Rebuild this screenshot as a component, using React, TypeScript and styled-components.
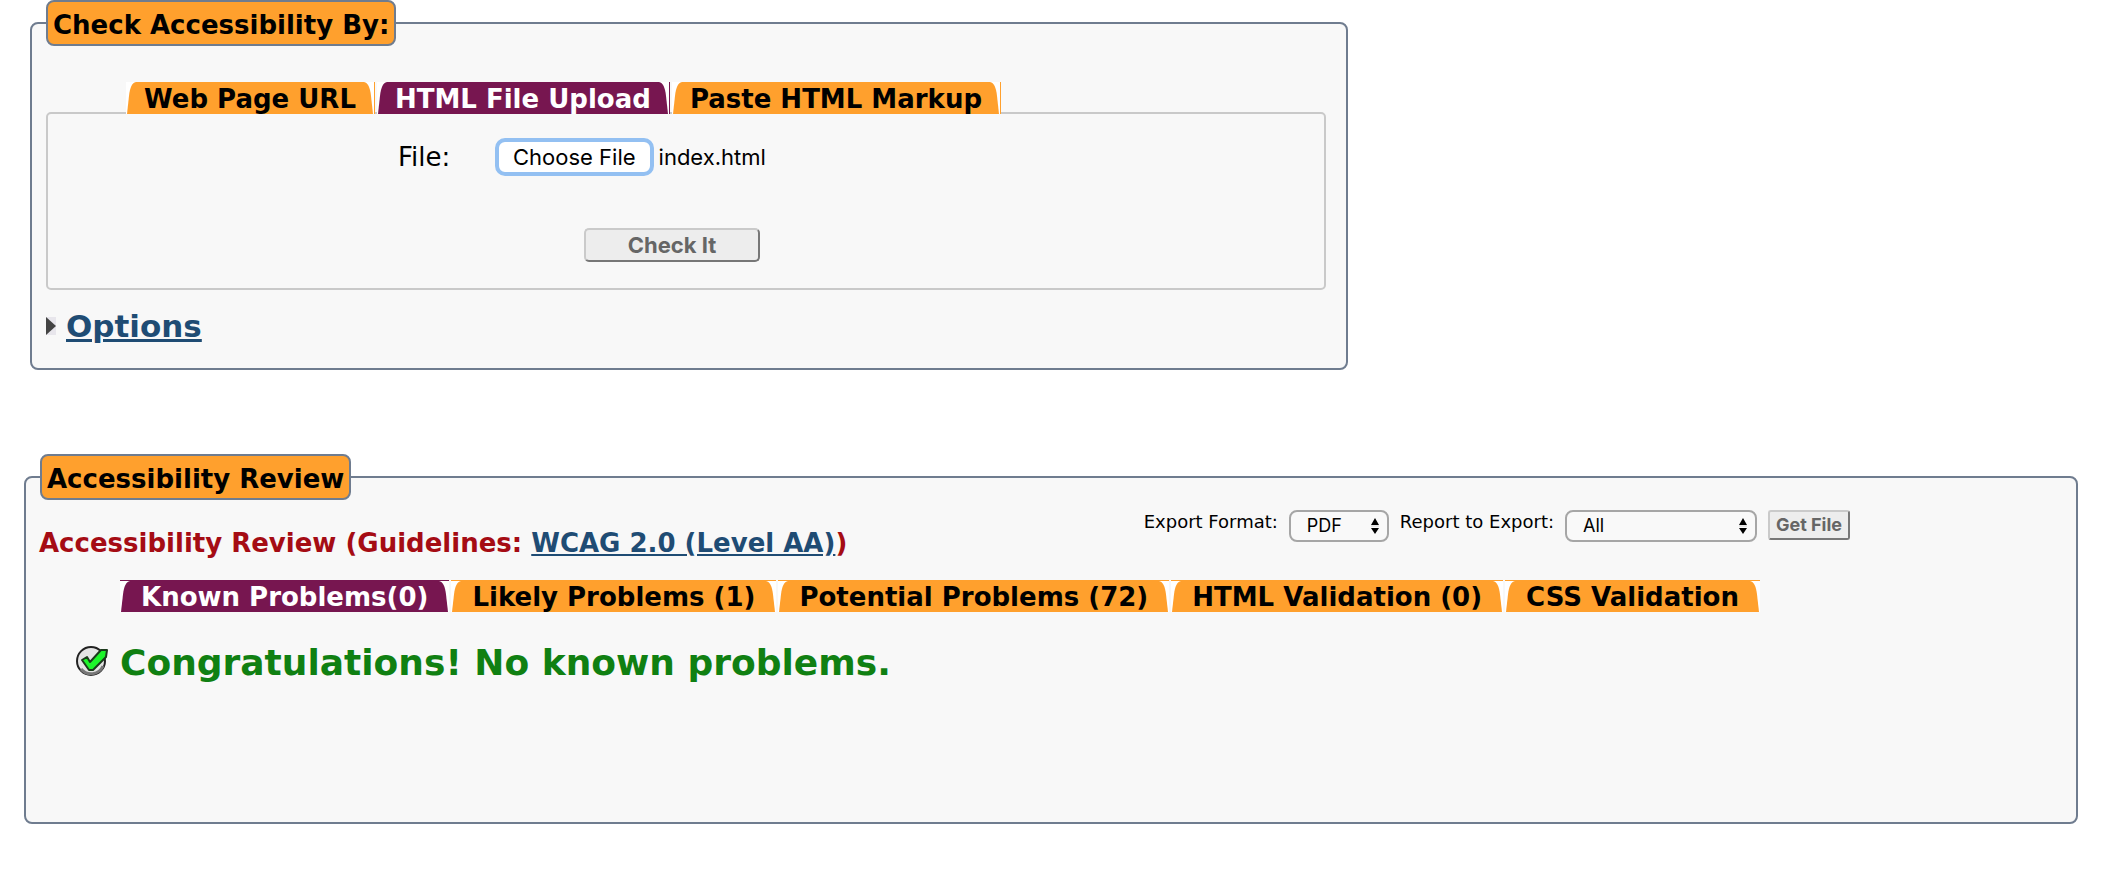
import React, { useRef, useState } from 'react';
import styled, { createGlobalStyle } from 'styled-components';

const ORANGE = '#ffa02d';
const PURPLE = '#771650';
const SLATE = '#6f7c8f';
const LINK = '#1f4c74';

const GlobalStyle = createGlobalStyle`
  *, *::before, *::after { box-sizing: border-box; }
  body {
    margin: 0;
    background: #fff;
    color: #000;
    font-family: Verdana, 'DejaVu Sans', sans-serif;
    font-size: 26px;
    line-height: 30px;
  }
`;

const Page = styled.main`
  padding: 0 28px 58px 24px;
`;

const Panel = styled.fieldset`
  min-width: 0;
  margin: 0;
  padding: 0 20px 24px 14px;
  border: 2px solid ${SLATE};
  border-radius: 8px;
  background: #f8f8f8;
`;

const CheckerPanel = styled(Panel)`
  max-width: 1318px;
  margin: 0 0 84px 6px;
  padding-bottom: 22px;
`;

const Legend = styled.legend`
  height: 46px;
  padding: 8px 5px 4px;
  border: 2px solid ${SLATE};
  border-radius: 8px;
  background: ${ORANGE};
  font-weight: bold;
`;

type TabLine = 'side' | 'top';

const TabList = styled.div<{ $line: TabLine }>`
  position: relative;
  display: flex;
  gap: 2px;
  margin: ${(p) => (p.$line === 'side' ? 36 : 0)}px 0 0 80px;
`;

const TabButton = styled.button<{ $active: boolean; $line: TabLine }>`
  display: flex;
  height: 32px;
  padding: 0;
  border: none;
  ${(p) => (p.$line === 'side' ? 'border-right' : 'border-top')}: 1px solid ${(p) => (p.$active ? PURPLE : ORANGE)};
  background: #fff;
  color: ${(p) => (p.$active ? '#fff' : '#000')};
  font: bold 26px/30px Verdana, 'DejaVu Sans', sans-serif;
  white-space: nowrap;
  cursor: pointer;
`;

const TabText = styled.span<{ $active: boolean; $line: TabLine }>`
  height: 100%;
  padding: ${(p) => (p.$line === 'side' ? '2px 6px 0' : '1px 9px 0')};
  background: ${(p) => (p.$active ? PURPLE : ORANGE)};
`;

const TabEnd = styled.svg`
  display: block;
  flex: none;
  width: 12px;
  height: 100%;
`;

const UploadBox = styled.div`
  display: flex;
  flex-direction: column;
  gap: 52px;
  height: 178px;
  margin: -2px 0 0;
  padding: 24px 28px 0 0;
  border: 2px solid #c9c9c9;
  border-radius: 5px;
`;

const FileRow = styled.div`
  display: grid;
  grid-template-columns: 97px auto auto;
  justify-content: start;
  align-items: center;
  margin-left: 350px;
`;

const HiddenFile = styled.input`
  display: none;
`;

const ChooseButton = styled.button`
  height: 38px;
  margin-right: 5px;
  padding: 0 14px;
  border: 4px solid #93c0f2;
  border-radius: 10px;
  background: #fff;
  color: #000;
  font: 22px/30px Inter, sans-serif;
`;

const FileName = styled.span`
  font: 22px/30px Inter, sans-serif;
`;

const RaisedButton = styled.button`
  border: 2px solid;
  border-color: #cacaca #777 #777 #cacaca;
  border-radius: 5px;
  background: #ededed;
  color: #666;
  font-family: Inter, sans-serif;
  font-weight: bold;
`;

const CheckButton = styled(RaisedButton)`
  align-self: center;
  width: 176px;
  height: 34px;
  padding: 0;
  font-size: 22px;
  line-height: 30px;
`;

const GetFileButton = styled(RaisedButton)`
  width: 82px;
  height: 30px;
  padding: 0;
  border-radius: 3px;
  font-size: 18px;
  line-height: 24px;
`;

const OptionsHeading = styled.h2`
  display: flex;
  align-items: center;
  gap: 10px;
  margin: 16px 0 0;
  font-size: 31px;
  line-height: 40px;
`;

const Anchor = styled.a`
  color: ${LINK};
  text-decoration: underline;
`;

const Header = styled.div`
  display: flex;
  align-items: flex-start;
  justify-content: space-between;
`;

const ReviewTitle = styled.h3`
  margin: 28px 0 22px -1px;
  color: #a50c14;
  font-size: 26px;
  line-height: 30px;
`;

const ExportForm = styled.form`
  display: flex;
  align-items: flex-start;
  gap: 11px;
  margin: 10px 206px 0 0;
  font-size: 18px;
  line-height: 24px;
`;

const SelectWrap = styled.span<{ $width: number }>`
  position: relative;
  width: ${(p) => p.$width}px;
`;

const Select = styled.select`
  display: block;
  appearance: none;
  width: 100%;
  height: 32px;
  padding: 0 0 0 16px;
  border: 2px solid #a6a6a6;
  border-radius: 8px;
  background: #f9f9f9;
  color: #000;
  font: 18px/28px Inter, sans-serif;
`;

const SelectArrows = styled.svg`
  position: absolute;
  top: 8px;
  right: 9px;
  width: 10px;
  height: 16px;
  pointer-events: none;
`;

const Result = styled.h2`
  display: flex;
  align-items: flex-start;
  gap: 11px;
  min-height: 158px;
  margin: 28px 0 0 35px;
  color: #108012;
  font-size: 36px;
  line-height: 46px;
`;

const ResultIcon = styled.svg`
  flex: none;
  margin-top: 5px;
`;

type TabProps = {
  label: string;
  active: boolean;
  line: TabLine;
  onSelect: () => void;
};

function Tab({ label, active, line, onSelect }: TabProps) {
  const fill = active ? PURPLE : ORANGE;
  return (
    <TabButton type="button" role="tab" aria-selected={active} $active={active} $line={line} onClick={onSelect}>
      <TabEnd viewBox="0 0 12 32" preserveAspectRatio="none" aria-hidden="true">
        <path d="M1 32 L3 14 C4 5 6 1 10 0 H12 V32 Z" fill={fill} />
      </TabEnd>
      <TabText $active={active} $line={line}>{label}</TabText>
      <TabEnd viewBox="0 0 12 32" preserveAspectRatio="none" aria-hidden="true">
        <path d="M11 32 L9 14 C8 5 6 1 2 0 H0 V32 Z" fill={fill} />
      </TabEnd>
    </TabButton>
  );
}

function Tabs({ labels, initial, line }: { labels: string[]; initial: number; line: TabLine }) {
  const [current, setCurrent] = useState(initial);
  return (
    <TabList role="tablist" $line={line}>
      {labels.map((label, i) => (
        <Tab key={label} label={label} line={line} active={i === current} onSelect={() => setCurrent(i)} />
      ))}
    </TabList>
  );
}

function Arrows() {
  return (
    <SelectArrows viewBox="0 0 10 16" aria-hidden="true">
      <path d="M5 0 L9 7 H1 Z M5 16 L9 10 H1 Z" fill="#000" />
      <path d="M1 8 H9" stroke="#d0d0d0" strokeWidth="1" />
    </SelectArrows>
  );
}

export default function App() {
  const fileRef = useRef<HTMLInputElement>(null);
  const [fileName, setFileName] = useState('index.html');

  return (
    <Page>
      <GlobalStyle />
      <CheckerPanel>
        <Legend>Check Accessibility By:</Legend>
        <Tabs labels={['Web Page URL', 'HTML File Upload', 'Paste HTML Markup']} initial={1} line="side" />
        <UploadBox>
          <FileRow>
            <label htmlFor="upload">File:</label>
            <HiddenFile
              id="upload"
              type="file"
              ref={fileRef}
              onChange={(e) => setFileName(e.target.files?.[0]?.name ?? '')}
            />
            <ChooseButton type="button" onClick={() => fileRef.current?.click()}>Choose File</ChooseButton>
            <FileName>{fileName}</FileName>
          </FileRow>
          <CheckButton type="button">Check It</CheckButton>
        </UploadBox>
        <OptionsHeading>
          <svg width="10" height="18" viewBox="0 0 10 18" aria-hidden="true">
            <rect width="10" height="18" fill="#e8e6ec" />
            <path d="M0 0 L10 9 L0 18 Z" fill="#444" />
          </svg>
          <Anchor href="#options">Options</Anchor>
        </OptionsHeading>
      </CheckerPanel>

      <Panel>
        <Legend>Accessibility Review</Legend>
        <Header>
          <ReviewTitle>
            Accessibility Review (Guidelines: <Anchor href="#wcag2-aa">WCAG 2.0 (Level AA)</Anchor>)
          </ReviewTitle>
          <ExportForm onSubmit={(e) => e.preventDefault()}>
            <label htmlFor="format">Export Format:</label>
            <SelectWrap $width={100}>
              <Select id="format"><option>PDF</option></Select>
              <Arrows />
            </SelectWrap>
            <label htmlFor="report">Report to Export:</label>
            <SelectWrap $width={192}>
              <Select id="report"><option>All</option></Select>
              <Arrows />
            </SelectWrap>
            <GetFileButton type="submit">Get File</GetFileButton>
          </ExportForm>
        </Header>
        <Tabs
          labels={['Known Problems(0)', 'Likely Problems (1)', 'Potential Problems (72)', 'HTML Validation (0)', 'CSS Validation']}
          initial={0}
          line="top"
        />
        <Result>
          <ResultIcon width="34" height="32" viewBox="0 0 34 32" aria-hidden="true">
            <circle cx="16" cy="16" r="14" fill="#e4e4e4" stroke="#222" strokeWidth="2" />
            <path d="M6 24 A13 13 0 0 0 28 21" fill="none" stroke="#777" strokeWidth="3" />
            <path d="M7 15 L12 12 L15 17 L26 5 L32 5 L31 12 L18 25 L14 25 Z" fill="#1df52a" stroke="#1b3a1b" strokeWidth="2" strokeLinejoin="round" />
          </ResultIcon>
          Congratulations! No known problems.
        </Result>
      </Panel>
    </Page>
  );
}
